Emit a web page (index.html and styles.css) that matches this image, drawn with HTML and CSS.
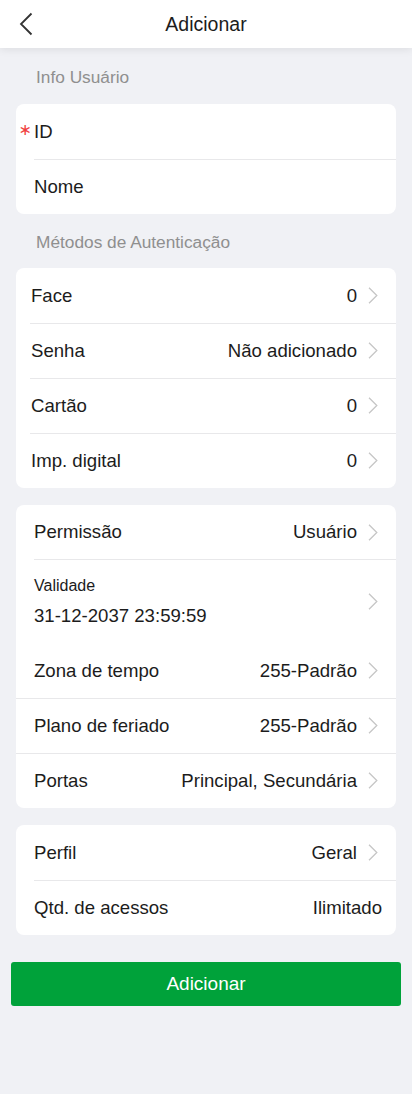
FILE: index.html
```html
<!DOCTYPE html>
<html lang="pt">
<head>
<meta charset="utf-8">
<link rel="stylesheet" href="styles.css">
</head>
<body>
<header class="topbar">
  <svg class="back" width="14" height="24" viewBox="0 0 14 24"><path d="M12.5 1.5 L2 12 L12.5 22.5" fill="none" stroke="#333" stroke-width="1.8"/></svg>
  <div class="title">Adicionar</div>
</header>
<main class="content">
  <div class="section-label">Info Usuário</div>
  <div class="card">
    <div class="row"><span class="label req">ID</span></div>
    <div class="row div-inset"><span class="label">Nome</span></div>
  </div>

  <div class="section-label">Métodos de Autenticação</div>
  <div class="card card-tight">
    <div class="row"><span class="label">Face</span><span class="value">0</span><span class="chev"></span></div>
    <div class="row div-inset"><span class="label">Senha</span><span class="value">Não adicionado</span><span class="chev"></span></div>
    <div class="row div-inset"><span class="label">Cartão</span><span class="value">0</span><span class="chev"></span></div>
    <div class="row div-inset"><span class="label">Imp. digital</span><span class="value">0</span><span class="chev"></span></div>
  </div>

  <div class="card gap-top">
    <div class="row row-first"><span class="label">Permissão</span><span class="value">Usuário</span><span class="chev"></span></div>
    <div class="row row-tall div-inset">
      <div class="stack">
        <span class="small">Validade</span>
        <span class="label">31-12-2037 23:59:59</span>
      </div>
      <span class="chev"></span>
    </div>
    <div class="row"><span class="label">Zona de tempo</span><span class="value">255-Padrão</span><span class="chev"></span></div>
    <div class="row div-full"><span class="label">Plano de feriado</span><span class="value">255-Padrão</span><span class="chev"></span></div>
    <div class="row div-full"><span class="label">Portas</span><span class="value">Principal, Secundária</span><span class="chev"></span></div>
  </div>

  <div class="card gap-top">
    <div class="row"><span class="label">Perfil</span><span class="value">Geral</span><span class="chev"></span></div>
    <div class="row div-inset no-chev"><span class="label">Qtd. de acessos</span><span class="value">Ilimitado</span></div>
  </div>

  <button class="primary">Adicionar</button>
</main>
</body>
</html>
```

FILE: styles.css
```css
* { box-sizing: border-box; }
html, body { margin: 0; padding: 0; }
body {
  background: #f0f1f5;
  font-family: "Liberation Sans", Arial, sans-serif;
  color: #1c1c1c;
  width: 412px;
  min-height: 1094px;
}
.topbar {
  position: relative;
  height: 48px;
  background: #fff;
  display: flex;
  align-items: center;
  justify-content: center;
  box-shadow: 0 2px 8px rgba(0,0,0,0.08);
}
.back {
  position: absolute;
  left: 19px;
  top: 12px;
}
.title {
  font-size: 19.5px;
  color: #1c1c1c;
  padding-top: 1px;
}
.content {
  padding: 0 16px 40px;
  display: flex;
  flex-direction: column;
}
.section-label {
  height: 56px;
  display: flex;
  align-items: center;
  padding-left: 20px;
  padding-top: 3px;
  font-size: 17.3px;
  color: #8f8f8f;
}
.section-label + .card + .section-label { height: 54px; padding-top: 2px; }
.card {
  background: #fff;
  border-radius: 8px;
  overflow: hidden;
}
.gap-top { margin-top: 17px; }
.row {
  position: relative;
  height: 55px;
  display: flex;
  align-items: center;
  padding: 0 18px 0 18px;
  font-size: 18.6px;
}
.card-tight .row { padding-left: 15px; height: 55px; }
.row-first { height: 54px; }
.row-tall { height: 84px; }
.div-inset::before,
.div-full::before {
  content: "";
  position: absolute;
  top: 0;
  right: 0;
  height: 1px;
  background: #e8e8ea;
}
.div-inset::before { left: 18px; }
.card-tight .div-inset::before { left: 14px; }
.div-full::before { left: 0; }
.label { white-space: nowrap; }
.req { position: relative; }
.req::before {
  content: "∗";
  position: absolute;
  right: 100%;
  top: -1px;
  margin-right: 2px;
  color: #f04040;
  font-family: "DejaVu Sans", sans-serif;
  font-size: 16px;
}
.value {
  margin-left: auto;
  white-space: nowrap;
}
.chev {
  width: 10px;
  height: 17px;
  margin-left: 11px;
  background: no-repeat center/10px 17px url("data:image/svg+xml;utf8,<svg xmlns='http://www.w3.org/2000/svg' width='10' height='17' viewBox='0 0 10 17'><path d='M1 0.8 L8.8 8.5 L1 16.2' fill='none' stroke='%23c6c6c6' stroke-width='1.3'/></svg>");
  flex: none;
}
.row-tall .chev { margin-left: auto; }
.no-chev { padding-right: 14px; }
.stack {
  display: flex;
  flex-direction: column;
  gap: 10px;
  padding-top: 2px;
}
.small { font-size: 16px; }
.primary {
  margin: 27px -5px 0;
  height: 44px;
  border: none;
  border-radius: 3px;
  background: #00a23a;
  color: #fff;
  font-family: "Liberation Sans", Arial, sans-serif;
  font-size: 19px;
}
```
